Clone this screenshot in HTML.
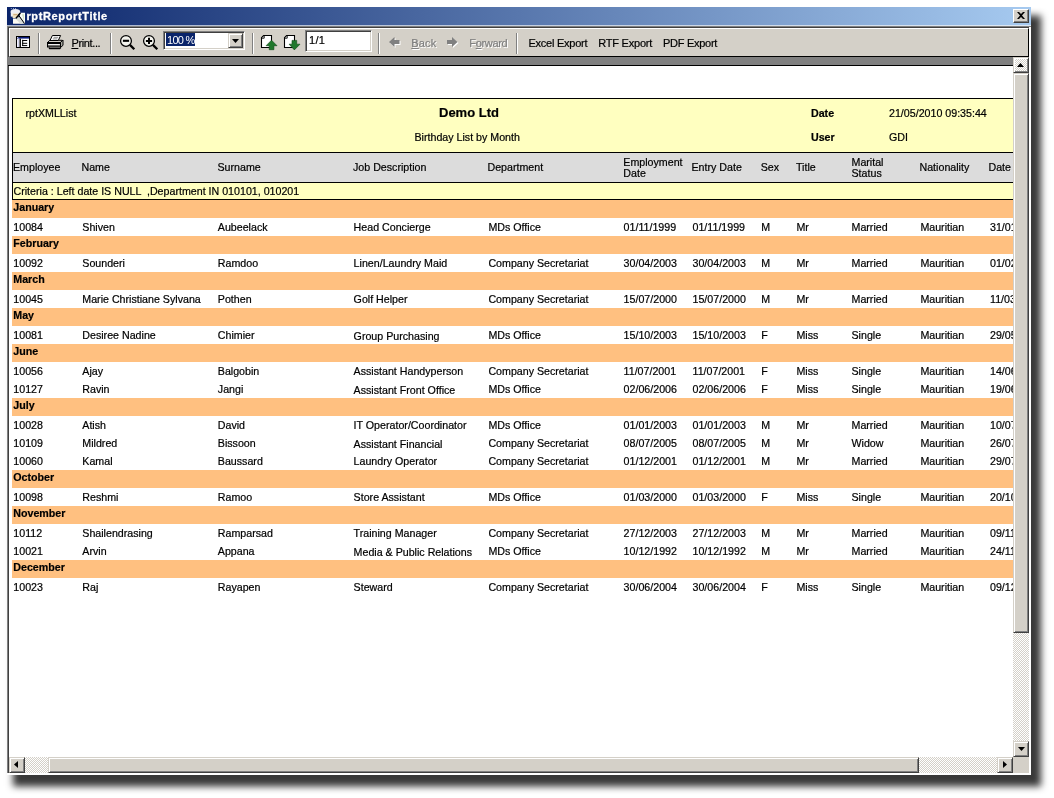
<!DOCTYPE html>
<html lang="en"><head><meta charset="utf-8"><title>rptReportTitle</title>
<style>
html,body{margin:0;padding:0;background:#fff;}
body{width:1054px;height:798px;position:relative;overflow:hidden;font-family:"Liberation Sans",sans-serif;}
.abs,#win *{position:absolute;box-sizing:border-box;}
#win{position:absolute;will-change:transform;left:7px;top:7px;width:1024px;height:768px;background:#d4d0c8;box-shadow:8px 9.5px 7px 2px rgba(0,0,0,.78);}
#title{left:0;top:0;width:1024px;height:18px;background:linear-gradient(90deg,#0a246a 0%,#a6caf0 100%);}
#title .cap{left:19.4px;top:2px;font-size:11px;font-weight:bold;color:#fff;line-height:14px;white-space:nowrap;letter-spacing:0.64px;-webkit-text-stroke:0.3px;}
#close{left:1006px;top:2px;width:16px;height:14px;background:#d4d0c8;border:1px solid;border-color:#fff #404040 #404040 #fff;box-shadow:inset -1px -1px 0 #808080;}
#tb{left:2px;top:21px;width:1020px;height:29px;background:#d4d0c8;border:1px solid;border-color:#fff #000 #000 #fff;}
.sep{width:2px;height:21px;top:4px;border-left:1px solid #808080;border-right:1px solid #fff;}
.tbt{font-size:11px;line-height:14px;top:10px;color:#000;white-space:nowrap;-webkit-text-stroke:0.2px;}
.dis{color:#808080;text-shadow:1px 1px 0 #fff;}
#win u{position:static;text-decoration:underline;}
#band{left:1px;top:50px;width:1005px;height:9px;background:#808080;border-bottom:1px solid #000;}
#view{left:2px;top:59px;width:1004px;height:691px;background:#fff;overflow:hidden;}
.rt{font-size:10.667px;line-height:18px;color:#000;white-space:nowrap;-webkit-text-stroke:0.2px;}
.b{font-weight:bold;}
.grp{left:3px;width:1010px;height:18px;background:#ffc080;}
.trk{background-color:#fff;background-image:linear-gradient(45deg,#d4d0c8 25%,transparent 25%,transparent 75%,#d4d0c8 75%),linear-gradient(45deg,#d4d0c8 25%,transparent 25%,transparent 75%,#d4d0c8 75%);background-size:2px 2px;background-position:0 0,1px 1px;}
.btn{background-color:#d4d0c8;border:1px solid;border-color:#d4d0c8 #404040 #404040 #d4d0c8;box-shadow:inset 1px 1px 0 #fff,inset -1px -1px 0 #808080;}
.btn.trk{background-color:#fff;}
</style></head><body>
<div id="win">

<div id="title">
<svg style="left:3px;top:1px" width="16" height="17" viewBox="10 8 16 17"><ellipse cx="15.4" cy="11.8" rx="4.8" ry="2.7" fill="#ececf2"/><rect x="10.8" y="12" width="2.2" height="4.6" fill="#f0f0f4"/><rect x="12.6" y="13.4" width="5.6" height="4.6" fill="#f0e2c0"/><rect x="13.4" y="14.2" width="4" height="1" fill="#c8a070"/><path d="M13 18.4h6l4 5.4h-10z" fill="#fbfaf2"/><path d="M20.4 12.7H25V23.8H24.5L19.4 16.4Z" fill="#f8fbf6"/><path d="M22 14.2h2v7z" fill="#cfe2c2"/><path d="M16 19.2l3.4-2.8 5.2 7.4h-4z" fill="#d8dcd8"/><path d="M16 18.2L20.4 13" stroke="#000" stroke-width="1.4" fill="none"/><path d="M19.2 16l5.3 7.5" stroke="#000" stroke-width="1" fill="none"/><rect x="10.8" y="8" width="1" height="1" fill="#8aa0d0"/><rect x="13" y="8" width="1" height="1" fill="#8aa0d0"/><rect x="15" y="8" width="1" height="1" fill="#8aa0d0"/></svg>
<div class="cap">rptReportTitle</div>
<div id="close"><svg style="left:3px;top:2px" width="8" height="7" viewBox="0 0 8 7"><path d="M0 0h2l2 2 2-2h2l-3 3.5 3 3.5h-2l-2-2-2 2h-2l3-3.5z" fill="#000"/></svg></div>
</div>
<div style="left:0;top:18px;width:1024px;height:1px;background:linear-gradient(90deg,#a9b4cc,#dde8f4)"></div>
<div style="left:0;top:19px;width:1024px;height:1px;background:#808080"></div>
<div style="left:1px;top:20px;width:1023px;height:1px;background:#404040"></div>
<div style="left:0;top:19px;width:1px;height:749px;background:#808080"></div>
<div style="left:1px;top:20px;width:1px;height:747px;background:#404040"></div>
<div style="left:1022px;top:20px;width:2px;height:748px;background:#fff"></div>
<div style="left:0;top:766px;width:1024px;height:2px;background:#fff"></div>
<div id="tb">
<svg style="left:6px;top:7px" width="14" height="12" viewBox="0 0 14 12"><rect x="0.5" y="0.5" width="13" height="11" fill="#fff" stroke="#000"/><rect x="1" y="1" width="12" height="1.6" fill="#0a1a78"/><rect x="1.2" y="1" width="1" height="1" fill="#fff"/><rect x="1.7" y="2.6" width="1.3" height="8.4" fill="#d4d4f0"/><rect x="3.5" y="2.6" width="1.4" height="8.6" fill="#000"/><path d="M6.7 3.8v6.2M6.2 4.5h5M6.2 7.3h5M6.2 9.6h5" stroke="#000" stroke-width="1" fill="none"/></svg>
<div class="sep" style="left:28px"></div>
<svg style="left:36px;top:5px" width="18" height="16" viewBox="46 34 18 16"><path d="M60.5 42.5l2.5-2.5v5.3l-2.5 2.2z" fill="#a8a8a0" stroke="#000" stroke-width="1" stroke-linejoin="round"/><path d="M47.5 42.5l2.3-2.2h12.6l-1.9 2.2z" fill="#d4d0c8" stroke="#000" stroke-width="1" stroke-linejoin="round"/><path d="M52.4 35.5h8.2l-2.3 5h-8.3z" fill="#fff" stroke="#000" stroke-width="1" stroke-linejoin="round"/><path d="M53.6 37.3h4.6M52.8 38.9h4.6" stroke="#808080" stroke-width=".9"/><rect x="47.5" y="42.5" width="13" height="4.5" fill="#d4d0c8" stroke="#000" stroke-width="1"/><path d="M48 43.5h12" stroke="#000" stroke-width="1"/><path d="M48.5 44.7h11" stroke="#f4f4f4" stroke-width="1.1"/><path d="M48 46h12" stroke="#000" stroke-width="1"/><path d="M49 47.6l.6 1h10.2l1-1" fill="none" stroke="#000" stroke-width="1.1"/></svg>
<div class="tbt" style="left:61.4px;top:7.4px;letter-spacing:-0.36px;"><u>P</u>rint...</div>
<div class="sep" style="left:100px"></div>
<svg style="left:109px;top:5px" width="17" height="17" viewBox="0 0 17 17"><circle cx="7" cy="6.9" r="5.4" fill="#f4f4ee" stroke="#000" stroke-width="1.25"/><path d="M10.9 10.9L15.3 15.2" stroke="#000" stroke-width="2.3"/><path d="M3.9 6.8h6.2" stroke="#000" stroke-width="2.1"/></svg>
<svg style="left:132px;top:5px" width="17" height="17" viewBox="0 0 17 17"><circle cx="7" cy="6.9" r="5.4" fill="#f4f4ee" stroke="#000" stroke-width="1.25"/><path d="M10.9 10.9L15.3 15.2" stroke="#000" stroke-width="2.3"/><path d="M3.9 6.9h6.2M7 3.8v6.2" stroke="#000" stroke-width="2"/></svg>
<div style="left:153px;top:2px;width:82px;height:19px;background:#fff;border:1px solid;border-color:#808080 #fff #fff #808080;box-shadow:inset 1px 1px 0 #404040,inset -1px -1px 0 #d4d0c8"><div style="left:2px;top:1px;width:29px;height:13px;background:#0a246a"></div><div class="tbt" style="left:3px;top:1.4px;color:#fff;letter-spacing:-0.7px;-webkit-text-stroke:0">100 %</div><div class="btn" style="left:64px;top:1px;width:15px;height:15px"><svg style="left:3px;top:5px" width="7" height="4" viewBox="0 0 7 4"><path d="M0 0h7l-3.5 4z" fill="#000"/></svg></div></div>
<div class="sep" style="left:242px"></div>
<svg style="left:250px;top:5px" width="18" height="17" viewBox="0 0 18 17"><path d="M1.5 3.6L3.6 1.5H11.5V13.5H1.5Z" fill="#fff" stroke="#000" stroke-width="1.1"/><path d="M1.8 4.2h2.4V1.8" fill="none" stroke="#000" stroke-width=".9"/><path d="M11.5 6.2L17 11.7H13.9V15.7H9.2V11.7H6.1Z" fill="#20782c" stroke="#0c4a14" stroke-width=".6"/></svg>
<svg style="left:273px;top:5px" width="18" height="17" viewBox="0 0 18 17"><path d="M1.5 3.6L3.6 1.5H11.5V13.5H1.5Z" fill="#fff" stroke="#000" stroke-width="1.1"/><path d="M1.8 4.2h2.4V1.8" fill="none" stroke="#000" stroke-width=".9"/><path d="M9 6.4H13.7V10.2H17L11.35 15.9L6.1 10.2H9Z" fill="#20782c" stroke="#0c4a14" stroke-width=".6"/></svg>
<div style="left:295px;top:1px;width:67px;height:22px;background:#fff;border:1px solid;border-color:#808080 #fff #fff #808080;box-shadow:inset 1px 1px 0 #404040,inset -1px -1px 0 #d4d0c8"><div class="tbt" style="left:3px;top:2.4px;letter-spacing:0.3px">1/1</div></div>
<div class="sep" style="left:368px"></div>
<svg style="left:379.3px;top:7.8px" width="12" height="11" viewBox="0 0 12 11"><path d="M1 6L6.5 1v3H11.5v4H6.5v3z" fill="#fff"/><path d="M0 5L5.5 0v3H10.5v4H5.5v3z" fill="#808080"/></svg>
<div class="tbt dis" style="left:401.3px;top:7.2px;letter-spacing:0.15px;"><u>B</u>ack</div>
<svg style="left:437px;top:7.8px" width="12" height="11" viewBox="0 0 12 11"><path d="M11.5 6L6 1v3H1v4h5v3z" fill="#fff"/><path d="M10.5 5L5 0v3H0v4h5v3z" fill="#808080"/></svg>
<div class="tbt dis" style="left:459.3px;top:7.2px;letter-spacing:-0.34px;">F<u>o</u>rward</div>
<div class="sep" style="left:506px"></div>
<div class="tbt" style="left:518.5px;top:7.2px;letter-spacing:-0.25px;">Excel Export</div>
<div class="tbt" style="left:588.3px;top:7.2px;letter-spacing:-0.23px;">RTF Export</div>
<div class="tbt" style="left:653px;top:7.2px;letter-spacing:-0.28px;">PDF Export</div>
</div>
<div id="band"></div>
<div id="view">
<div style="left:3px;top:32px;width:1010px;height:55px;background:#ffffc0;border:1px solid #000;border-right:0"></div>
<div style="left:3px;top:86px;width:1010px;height:31px;background:#dcdcdc;border:1px solid #000;border-right:0"></div>
<div style="left:3px;top:116px;width:1010px;height:18px;background:#ffffc0;border:1px solid #000;border-right:0"></div>
<div class="rt" style="left:16.5px;top:38px;">rptXMLList</div>
<div class="rt b" style="left:430px;top:37.5px;font-size:13px;">Demo Ltd</div>
<div class="rt" style="left:405.5px;top:62px;">Birthday List by Month</div>
<div class="rt b" style="left:802px;top:38px;">Date</div>
<div class="rt b" style="left:802px;top:62px;">User</div>
<div class="rt" style="left:880px;top:38px;">21/05/2010 09:35:44</div>
<div class="rt" style="left:880px;top:62px;">GDI</div>
<div class="rt" style="left:4px;top:92px;">Employee</div>
<div class="rt" style="left:72.5px;top:92px;">Name</div>
<div class="rt" style="left:208.5px;top:92px;">Surname</div>
<div class="rt" style="left:344px;top:92px;">Job Description</div>
<div class="rt" style="left:478.5px;top:92px;">Department</div>
<div class="rt" style="left:614.3px;top:90.5px;line-height:11px;">Employment<br>Date</div>
<div class="rt" style="left:682.5px;top:92px;">Entry Date</div>
<div class="rt" style="left:751.7px;top:92px;">Sex</div>
<div class="rt" style="left:787px;top:92px;">Title</div>
<div class="rt" style="left:842.5px;top:90.5px;line-height:11px;">Marital<br>Status</div>
<div class="rt" style="left:910.5px;top:92px;">Nationality</div>
<div class="rt" style="left:979.5px;top:92px;">Date of Birth</div>
<div class="rt" style="left:4.5px;top:116px;">Criteria : Left date IS NULL &nbsp;,Department IN 010101, 010201</div>
<div class="grp" style="top:133.5px"></div>
<div class="rt b" style="left:4.3px;top:131.9px;">January</div>
<div class="rt" style="left:4.3px;top:152.1px;">10084</div>
<div class="rt" style="left:73.3px;top:152.1px;">Shiven</div>
<div class="rt" style="left:208.8px;top:152.1px;">Aubeelack</div>
<div class="rt" style="left:344.6px;top:152.1px;">Head Concierge</div>
<div class="rt" style="left:479.4px;top:152.1px;">MDs Office</div>
<div class="rt" style="left:614.6px;top:152.1px;">01/11/1999</div>
<div class="rt" style="left:683.5px;top:152.1px;">01/11/1999</div>
<div class="rt" style="left:752.3px;top:152.1px;">M</div>
<div class="rt" style="left:787.4px;top:152.1px;">Mr</div>
<div class="rt" style="left:842.5px;top:152.1px;">Married</div>
<div class="rt" style="left:911.4px;top:152.1px;">Mauritian</div>
<div class="rt" style="left:981px;top:152.1px;">31/01/1975</div>
<div class="grp" style="top:169.5px"></div>
<div class="rt b" style="left:4.3px;top:167.9px;">February</div>
<div class="rt" style="left:4.3px;top:188.1px;">10092</div>
<div class="rt" style="left:73.3px;top:188.1px;">Sounderi</div>
<div class="rt" style="left:208.8px;top:188.1px;">Ramdoo</div>
<div class="rt" style="left:344.6px;top:188.1px;">Linen/Laundry Maid</div>
<div class="rt" style="left:479.4px;top:188.1px;">Company Secretariat</div>
<div class="rt" style="left:614.6px;top:188.1px;">30/04/2003</div>
<div class="rt" style="left:683.5px;top:188.1px;">30/04/2003</div>
<div class="rt" style="left:752.3px;top:188.1px;">M</div>
<div class="rt" style="left:787.4px;top:188.1px;">Mr</div>
<div class="rt" style="left:842.5px;top:188.1px;">Married</div>
<div class="rt" style="left:911.4px;top:188.1px;">Mauritian</div>
<div class="rt" style="left:981px;top:188.1px;">01/02/1968</div>
<div class="grp" style="top:205.5px"></div>
<div class="rt b" style="left:4.3px;top:203.9px;">March</div>
<div class="rt" style="left:4.3px;top:224.1px;">10045</div>
<div class="rt" style="left:73.3px;top:224.1px;">Marie Christiane Sylvana</div>
<div class="rt" style="left:208.8px;top:224.1px;">Pothen</div>
<div class="rt" style="left:344.6px;top:224.1px;">Golf Helper</div>
<div class="rt" style="left:479.4px;top:224.1px;">Company Secretariat</div>
<div class="rt" style="left:614.6px;top:224.1px;">15/07/2000</div>
<div class="rt" style="left:683.5px;top:224.1px;">15/07/2000</div>
<div class="rt" style="left:752.3px;top:224.1px;">M</div>
<div class="rt" style="left:787.4px;top:224.1px;">Mr</div>
<div class="rt" style="left:842.5px;top:224.1px;">Married</div>
<div class="rt" style="left:911.4px;top:224.1px;">Mauritian</div>
<div class="rt" style="left:981px;top:224.1px;">11/03/1972</div>
<div class="grp" style="top:241.5px"></div>
<div class="rt b" style="left:4.3px;top:239.9px;">May</div>
<div class="rt" style="left:4.3px;top:260.1px;">10081</div>
<div class="rt" style="left:73.3px;top:260.1px;">Desiree Nadine</div>
<div class="rt" style="left:208.8px;top:260.1px;">Chimier</div>
<div class="rt" style="left:344.6px;top:261.4px;">Group Purchasing</div>
<div class="rt" style="left:479.4px;top:260.1px;">MDs Office</div>
<div class="rt" style="left:614.6px;top:260.1px;">15/10/2003</div>
<div class="rt" style="left:683.5px;top:260.1px;">15/10/2003</div>
<div class="rt" style="left:752.3px;top:260.1px;">F</div>
<div class="rt" style="left:787.4px;top:260.1px;">Miss</div>
<div class="rt" style="left:842.5px;top:260.1px;">Single</div>
<div class="rt" style="left:911.4px;top:260.1px;">Mauritian</div>
<div class="rt" style="left:981px;top:260.1px;">29/05/1980</div>
<div class="grp" style="top:277.5px"></div>
<div class="rt b" style="left:4.3px;top:275.9px;">June</div>
<div class="rt" style="left:4.3px;top:296.1px;">10056</div>
<div class="rt" style="left:73.3px;top:296.1px;">Ajay</div>
<div class="rt" style="left:208.8px;top:296.1px;">Balgobin</div>
<div class="rt" style="left:344.6px;top:296.1px;">Assistant Handyperson</div>
<div class="rt" style="left:479.4px;top:296.1px;">Company Secretariat</div>
<div class="rt" style="left:614.6px;top:296.1px;">11/07/2001</div>
<div class="rt" style="left:683.5px;top:296.1px;">11/07/2001</div>
<div class="rt" style="left:752.3px;top:296.1px;">F</div>
<div class="rt" style="left:787.4px;top:296.1px;">Miss</div>
<div class="rt" style="left:842.5px;top:296.1px;">Single</div>
<div class="rt" style="left:911.4px;top:296.1px;">Mauritian</div>
<div class="rt" style="left:981px;top:296.1px;">14/06/1978</div>
<div class="rt" style="left:4.3px;top:314.1px;">10127</div>
<div class="rt" style="left:73.3px;top:314.1px;">Ravin</div>
<div class="rt" style="left:208.8px;top:314.1px;">Jangi</div>
<div class="rt" style="left:344.6px;top:315.4px;">Assistant Front Office</div>
<div class="rt" style="left:479.4px;top:314.1px;">MDs Office</div>
<div class="rt" style="left:614.6px;top:314.1px;">02/06/2006</div>
<div class="rt" style="left:683.5px;top:314.1px;">02/06/2006</div>
<div class="rt" style="left:752.3px;top:314.1px;">F</div>
<div class="rt" style="left:787.4px;top:314.1px;">Miss</div>
<div class="rt" style="left:842.5px;top:314.1px;">Single</div>
<div class="rt" style="left:911.4px;top:314.1px;">Mauritian</div>
<div class="rt" style="left:981px;top:314.1px;">19/06/1983</div>
<div class="grp" style="top:331.5px"></div>
<div class="rt b" style="left:4.3px;top:329.9px;">July</div>
<div class="rt" style="left:4.3px;top:350.1px;">10028</div>
<div class="rt" style="left:73.3px;top:350.1px;">Atish</div>
<div class="rt" style="left:208.8px;top:350.1px;">David</div>
<div class="rt" style="left:344.6px;top:350.1px;">IT Operator/Coordinator</div>
<div class="rt" style="left:479.4px;top:350.1px;">MDs Office</div>
<div class="rt" style="left:614.6px;top:350.1px;">01/01/2003</div>
<div class="rt" style="left:683.5px;top:350.1px;">01/01/2003</div>
<div class="rt" style="left:752.3px;top:350.1px;">M</div>
<div class="rt" style="left:787.4px;top:350.1px;">Mr</div>
<div class="rt" style="left:842.5px;top:350.1px;">Married</div>
<div class="rt" style="left:911.4px;top:350.1px;">Mauritian</div>
<div class="rt" style="left:981px;top:350.1px;">10/07/1971</div>
<div class="rt" style="left:4.3px;top:368.1px;">10109</div>
<div class="rt" style="left:73.3px;top:368.1px;">Mildred</div>
<div class="rt" style="left:208.8px;top:368.1px;">Bissoon</div>
<div class="rt" style="left:344.6px;top:369.4px;">Assistant Financial</div>
<div class="rt" style="left:479.4px;top:368.1px;">Company Secretariat</div>
<div class="rt" style="left:614.6px;top:368.1px;">08/07/2005</div>
<div class="rt" style="left:683.5px;top:368.1px;">08/07/2005</div>
<div class="rt" style="left:752.3px;top:368.1px;">M</div>
<div class="rt" style="left:787.4px;top:368.1px;">Mr</div>
<div class="rt" style="left:842.5px;top:368.1px;">Widow</div>
<div class="rt" style="left:911.4px;top:368.1px;">Mauritian</div>
<div class="rt" style="left:981px;top:368.1px;">26/07/1965</div>
<div class="rt" style="left:4.3px;top:386.1px;">10060</div>
<div class="rt" style="left:73.3px;top:386.1px;">Kamal</div>
<div class="rt" style="left:208.8px;top:386.1px;">Baussard</div>
<div class="rt" style="left:344.6px;top:386.1px;">Laundry Operator</div>
<div class="rt" style="left:479.4px;top:386.1px;">Company Secretariat</div>
<div class="rt" style="left:614.6px;top:386.1px;">01/12/2001</div>
<div class="rt" style="left:683.5px;top:386.1px;">01/12/2001</div>
<div class="rt" style="left:752.3px;top:386.1px;">M</div>
<div class="rt" style="left:787.4px;top:386.1px;">Mr</div>
<div class="rt" style="left:842.5px;top:386.1px;">Married</div>
<div class="rt" style="left:911.4px;top:386.1px;">Mauritian</div>
<div class="rt" style="left:981px;top:386.1px;">29/07/1974</div>
<div class="grp" style="top:403.5px"></div>
<div class="rt b" style="left:4.3px;top:401.9px;">October</div>
<div class="rt" style="left:4.3px;top:422.1px;">10098</div>
<div class="rt" style="left:73.3px;top:422.1px;">Reshmi</div>
<div class="rt" style="left:208.8px;top:422.1px;">Ramoo</div>
<div class="rt" style="left:344.6px;top:422.1px;">Store Assistant</div>
<div class="rt" style="left:479.4px;top:422.1px;">MDs Office</div>
<div class="rt" style="left:614.6px;top:422.1px;">01/03/2000</div>
<div class="rt" style="left:683.5px;top:422.1px;">01/03/2000</div>
<div class="rt" style="left:752.3px;top:422.1px;">F</div>
<div class="rt" style="left:787.4px;top:422.1px;">Miss</div>
<div class="rt" style="left:842.5px;top:422.1px;">Single</div>
<div class="rt" style="left:911.4px;top:422.1px;">Mauritian</div>
<div class="rt" style="left:981px;top:422.1px;">20/10/1979</div>
<div class="grp" style="top:439.5px"></div>
<div class="rt b" style="left:4.3px;top:437.9px;">November</div>
<div class="rt" style="left:4.3px;top:458.1px;">10112</div>
<div class="rt" style="left:73.3px;top:458.1px;">Shailendrasing</div>
<div class="rt" style="left:208.8px;top:458.1px;">Ramparsad</div>
<div class="rt" style="left:344.6px;top:458.1px;">Training Manager</div>
<div class="rt" style="left:479.4px;top:458.1px;">Company Secretariat</div>
<div class="rt" style="left:614.6px;top:458.1px;">27/12/2003</div>
<div class="rt" style="left:683.5px;top:458.1px;">27/12/2003</div>
<div class="rt" style="left:752.3px;top:458.1px;">M</div>
<div class="rt" style="left:787.4px;top:458.1px;">Mr</div>
<div class="rt" style="left:842.5px;top:458.1px;">Married</div>
<div class="rt" style="left:911.4px;top:458.1px;">Mauritian</div>
<div class="rt" style="left:981px;top:458.1px;">09/11/1976</div>
<div class="rt" style="left:4.3px;top:476.1px;">10021</div>
<div class="rt" style="left:73.3px;top:476.1px;">Arvin</div>
<div class="rt" style="left:208.8px;top:476.1px;">Appana</div>
<div class="rt" style="left:344.6px;top:477.4px;">Media &amp; Public Relations</div>
<div class="rt" style="left:479.4px;top:476.1px;">MDs Office</div>
<div class="rt" style="left:614.6px;top:476.1px;">10/12/1992</div>
<div class="rt" style="left:683.5px;top:476.1px;">10/12/1992</div>
<div class="rt" style="left:752.3px;top:476.1px;">M</div>
<div class="rt" style="left:787.4px;top:476.1px;">Mr</div>
<div class="rt" style="left:842.5px;top:476.1px;">Married</div>
<div class="rt" style="left:911.4px;top:476.1px;">Mauritian</div>
<div class="rt" style="left:981px;top:476.1px;">24/11/1966</div>
<div class="grp" style="top:493.5px"></div>
<div class="rt b" style="left:4.3px;top:491.9px;">December</div>
<div class="rt" style="left:4.3px;top:512.1px;">10023</div>
<div class="rt" style="left:73.3px;top:512.1px;">Raj</div>
<div class="rt" style="left:208.8px;top:512.1px;">Rayapen</div>
<div class="rt" style="left:344.6px;top:512.1px;">Steward</div>
<div class="rt" style="left:479.4px;top:512.1px;">Company Secretariat</div>
<div class="rt" style="left:614.6px;top:512.1px;">30/06/2004</div>
<div class="rt" style="left:683.5px;top:512.1px;">30/06/2004</div>
<div class="rt" style="left:752.3px;top:512.1px;">F</div>
<div class="rt" style="left:787.4px;top:512.1px;">Miss</div>
<div class="rt" style="left:842.5px;top:512.1px;">Single</div>
<div class="rt" style="left:911.4px;top:512.1px;">Mauritian</div>
<div class="rt" style="left:981px;top:512.1px;">09/12/1981</div>
</div>
<div class="trk" style="left:1006px;top:50px;width:16px;height:700px"></div>
<div class="btn trk" style="left:1006px;top:50px;width:16px;height:16px"><svg style="left:3px;top:5px" width="7" height="4" viewBox="0 0 7 4"><path d="M0 4h7l-3.5-4z" fill="#000"/></svg></div>
<div class="btn" style="left:1006px;top:66px;width:16px;height:560px"></div>
<div class="btn" style="left:1006px;top:734px;width:16px;height:16px"><svg style="left:4px;top:5px" width="7" height="4" viewBox="0 0 7 4"><path d="M0 0h7l-3.5 4z" fill="#000"/></svg></div>
<div class="trk" style="left:2px;top:750px;width:1004px;height:16px"></div>
<div class="btn" style="left:2px;top:750px;width:16px;height:16px"><svg style="left:4px;top:3px" width="4" height="7" viewBox="0 0 4 7"><path d="M4 0v7l-4-3.5z" fill="#000"/></svg></div>
<div class="btn" style="left:41px;top:750px;width:871px;height:16px"></div>
<div class="btn" style="left:990px;top:750px;width:16px;height:16px"><svg style="left:5px;top:3px" width="4" height="7" viewBox="0 0 4 7"><path d="M0 0v7l4-3.5z" fill="#000"/></svg></div>
<div style="left:1006px;top:750px;width:16px;height:16px;background:#d4d0c8"></div>
</div>
</body></html>
